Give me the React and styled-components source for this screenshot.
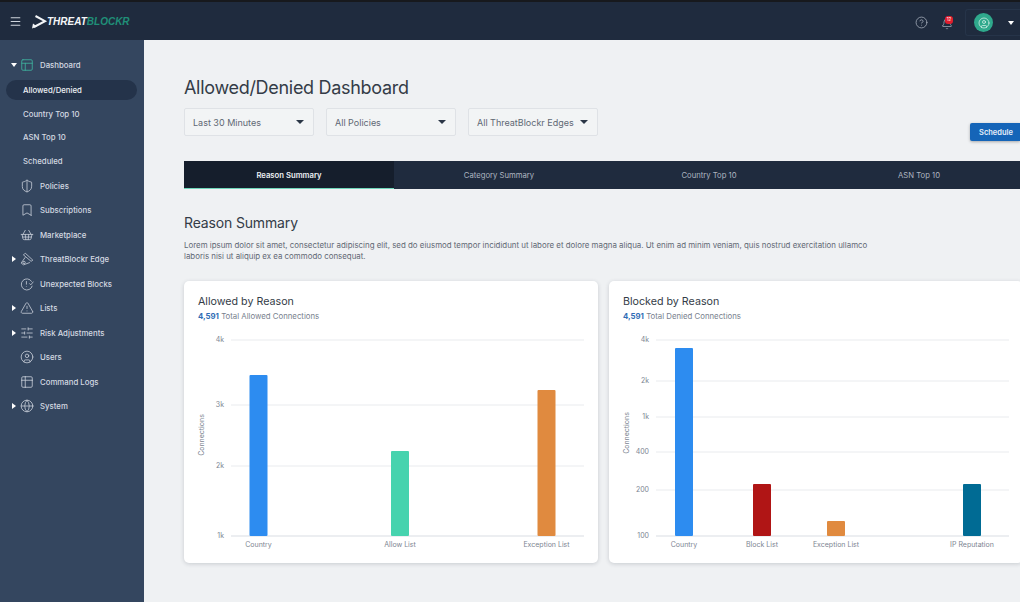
import React from 'react';
import styled, { createGlobalStyle } from 'styled-components';
import {
  Menu,
  CircleHelp,
  Bell,
  CircleUser,
  PanelsTopLeft,
  ShieldHalf,
  Bookmark,
  ShoppingBasket,
  TriangleAlert,
  SlidersHorizontal,
  Table2,
  Globe,
} from 'lucide-react';

const Edge = (props) => (
  <svg viewBox='0 0 24 24' fill='none' stroke='currentColor' strokeWidth='1.5' {...props}>
    <path d='M9 2l13 12-3 2L6 5z' />
    <path d='M9 9l-7 10 4 3 11-4' />
    <circle cx='7' cy='18' r='2' />
  </svg>
);

const Unexpected = (props) => (
  <svg viewBox='0 0 24 24' fill='none' stroke='currentColor' strokeWidth='1.5' {...props}>
    <path d='M20 8a9.5 9.5 0 1 0 1 7' />
    <path d='M11 7v6M11 16v1' />
    <path d='M16 11l2.5 2.5L23 8' />
  </svg>
);

const Arrow = () => (
  <svg width='16' height='14' viewBox='0 0 16 14'>
    <path d='M3.5 1L13 6.2 2 12' fill='none' stroke='#f4f6f8' strokeWidth='2' />
    <path d='M0 13.5l1-5 4 3z' fill='#f4f6f8' />
  </svg>
);

const NAV = [
  {
    label: 'Dashboard',
    icon: PanelsTopLeft,
    caret: 'down',
    teal: true,
    children: ['Allowed/Denied', 'Country Top 10', 'ASN Top 10', 'Scheduled'],
  },
  { label: 'Policies', icon: ShieldHalf },
  { label: 'Subscriptions', icon: Bookmark },
  { label: 'Marketplace', icon: ShoppingBasket },
  { label: 'ThreatBlockr Edge', icon: Edge, caret: 'right' },
  { label: 'Unexpected Blocks', icon: Unexpected },
  { label: 'Lists', icon: TriangleAlert, caret: 'right' },
  { label: 'Risk Adjustments', icon: SlidersHorizontal, caret: 'right' },
  { label: 'Users', icon: CircleUser },
  { label: 'Command Logs', icon: Table2 },
  { label: 'System', icon: Globe, caret: 'right' },
];

const TABS = ['Reason Summary', 'Category Summary', 'Country Top 10', 'ASN Top 10'];

const ALLOWED = {
  title: 'Allowed by Reason',
  total: 'Total Allowed Connections',
  axisY: 105,
  ticks: [
    { label: '4k', y: 10 },
    { label: '3k', y: 75 },
    { label: '2k', y: 136 },
    { label: '1k', y: 206 },
  ],
  bars: [
    { label: 'Country', x: 65.5, top: 45, color: '#2d8cf0' },
    { label: 'Allow List', x: 207, top: 121, color: '#46d3ae' },
    { label: 'Exception List', x: 353.5, top: 60, color: '#e08a3f' },
  ],
};

const BLOCKED = {
  title: 'Blocked by Reason',
  total: 'Total Denied Connections',
  axisY: 103,
  ticks: [
    { label: '4k', y: 10 },
    { label: '2k', y: 51 },
    { label: '1k', y: 87 },
    { label: '400', y: 122 },
    { label: '200', y: 160 },
    { label: '100', y: 206 },
  ],
  bars: [
    { label: 'Country', x: 66, top: 18, color: '#2d8cf0' },
    { label: 'Block List', x: 144, top: 154, color: '#b01515' },
    { label: 'Exception List', x: 218, top: 191, color: '#e08a3f' },
    { label: 'IP Reputation', x: 354, top: 154, color: '#006b94' },
  ],
};

function Chart({ data }) {
  return (
    <svg width='414' height='233' viewBox='0 0 414 233'>
      {data.ticks.map((t) => (
        <g key={t.label}>
          <GridLine x1='47' x2='400' y1={t.y} y2={t.y} $base={t.y === 206} />
          <Tick x='40' y={t.y + 2} textAnchor='end'>
            {t.label}
          </Tick>
        </g>
      ))}
      <Tick transform={`translate(19.5 ${data.axisY}) rotate(-90)`} textAnchor='middle'>
        Connections
      </Tick>
      {data.bars.map((b) => (
        <g key={b.label}>
          <rect x={b.x} y={b.top} width='18' height={206 - b.top} rx='1' fill={b.color} />
          <Tick x={b.x + 9} y='217' textAnchor='middle'>
            {b.label}
          </Tick>
        </g>
      ))}
    </svg>
  );
}

function ReasonCard({ data }) {
  return (
    <Card>
      <CardHead>
        <CardTitle>{data.title}</CardTitle>
        <CardSub>
          <b>4,591</b> {data.total}
        </CardSub>
      </CardHead>
      <Chart data={data} />
    </Card>
  );
}

function NavEntry({ item }) {
  return (
    <>
      <NavRow>
        <CaretSlot>{item.caret && <Caret $dir={item.caret} />}</CaretSlot>
        <NavIcon $teal={item.teal}>
          <item.icon width={14} height={14} strokeWidth={1.4} />
        </NavIcon>
        {item.label}
      </NavRow>
      {item.children && (
        <SubNav>
          {item.children.map((label, i) => (
            <SubRow key={label} $active={i === 0}>
              {label}
            </SubRow>
          ))}
        </SubNav>
      )}
    </>
  );
}

export default function App() {
  return (
    <>
      <GlobalStyle />
      <Frame>
        <TopBar>
          <Burger>
            <Menu size={13} strokeWidth={2} />
          </Burger>
          <Logo>
            <Arrow />
            <LogoText>
              THREAT<em>BLOCKR</em>
            </LogoText>
          </Logo>
          <HeaderTools>
            <ToolIcon>
              <CircleHelp size={13} strokeWidth={1.4} />
            </ToolIcon>
            <ToolIcon $drop>
              <Bell size={12} strokeWidth={1.4} />
              <Badge>12</Badge>
            </ToolIcon>
            <UserBox>
              <Avatar>
                <CircleUser size={12} strokeWidth={1.5} />
              </Avatar>
              <UserCaret />
            </UserBox>
          </HeaderTools>
        </TopBar>
        <Body>
          <Sidebar>
            {NAV.map((item) => (
              <NavEntry key={item.label} item={item} />
            ))}
          </Sidebar>
          <Main>
            <PageTitle>Allowed/Denied Dashboard</PageTitle>
            <FilterRow>
              <Filter>
                Last 30 Minutes
                <FilterCaret />
              </Filter>
              <Filter>
                All Policies
                <FilterCaret />
              </Filter>
              <Filter>
                All ThreatBlockr Edges
                <FilterCaret />
              </Filter>
              <ScheduleButton>Schedule</ScheduleButton>
            </FilterRow>
            <Tabs>
              {TABS.map((t, i) => (
                <Tab key={t} $active={i === 0}>
                  {t}
                </Tab>
              ))}
            </Tabs>
            <SectionTitle>Reason Summary</SectionTitle>
            <Description>
              Lorem ipsum dolor sit amet, consectetur adipiscing elit, sed do eiusmod tempor incididunt ut labore et
              dolore magna aliqua. Ut enim ad minim veniam, quis nostrud exercitation ullamco laboris nisi ut aliquip
              ex ea commodo consequat.
            </Description>
            <CardRow>
              <ReasonCard data={ALLOWED} />
              <ReasonCard data={BLOCKED} />
            </CardRow>
          </Main>
        </Body>
      </Frame>
    </>
  );
}

const GlobalStyle = createGlobalStyle`
  html, body {
    margin: 0;
    background: #fff;
    overflow: hidden;
  }
  * {
    box-sizing: border-box;
  }
`;

const Frame = styled.div`
  width: 1020px;
  height: 602px;
  display: flex;
  flex-direction: column;
  border-top: 2px solid #17191d;
  font-family: Inter, 'Open Sans', sans-serif;
  overflow: hidden;
`;

const TopBar = styled.header`
  height: 38px;
  flex: none;
  display: flex;
  align-items: center;
  background: #1f2b3e;
  color: #cfd5dd;
`;

const Burger = styled.div`
  width: 32px;
  padding-left: 9px;
  display: flex;
`;

const Logo = styled.div`
  padding-top: 1px;
  display: flex;
  align-items: center;
`;

const LogoText = styled.span`
  margin-left: -1px;
  font-family: 'Liberation Sans', Arial, sans-serif;
  font-size: 10px;
  font-weight: 700;
  font-style: italic;
  color: #f4f6f8;

  em {
    color: #1f8f78;
  }
`;

const HeaderTools = styled.div`
  margin-left: auto;
  padding-top: 3px;
  display: flex;
  align-items: center;
`;

const ToolIcon = styled.div`
  position: relative;
  width: 25px;
  padding-top: ${(p) => (p.$drop ? '2px' : '0')};
  display: flex;
  justify-content: center;
  color: #aab3bf;
`;

const Badge = styled.span`
  position: absolute;
  top: 0;
  left: 11px;
  width: 8px;
  height: 8px;
  border-radius: 3px;
  background: #e01e2e;
  color: #fff;
  font-size: 4.5px;
  line-height: 8px;
  text-align: center;
`;

const UserBox = styled.div`
  width: 55px;
  height: 27px;
  margin-left: 6px;
  padding-left: 8px;
  display: flex;
  align-items: center;
  border: 1px solid #263449;
  border-right: 0;
  border-radius: 3px 0 0 3px;
`;

const Avatar = styled.div`
  width: 19px;
  height: 19px;
  display: flex;
  align-items: center;
  justify-content: center;
  border-radius: 50%;
  background: #2fa98c;
  color: #d8f1ea;
`;

const UserCaret = styled.span`
  margin-left: 15px;
  border-left: 3.5px solid transparent;
  border-right: 3.5px solid transparent;
  border-top: 4px solid #fff;
`;

const Body = styled.div`
  flex: 1;
  min-height: 0;
  display: flex;
`;

const Sidebar = styled.nav`
  width: 144px;
  flex: none;
  padding: 12.75px 7px 0 0;
  background: #34465f;
  color: #d5dae2;
  font-size: 7.8px;
  font-weight: 500;
  white-space: nowrap;
`;

const NavRow = styled.div`
  height: 24.5px;
  display: flex;
  align-items: center;
`;

const SubNav = styled.div`
  padding: 3px 0;
  display: flex;
  flex-direction: column;
  gap: 4px;
`;

const SubRow = styled.div`
  height: 19.5px;
  margin-left: 6px;
  padding-left: 17px;
  display: flex;
  align-items: center;
  border-radius: 10px;
  background: ${(p) => (p.$active ? '#24334a' : 'transparent')};
  color: ${(p) => (p.$active ? '#eef1f5' : 'inherit')};
`;

const CaretSlot = styled.span`
  width: 20px;
  flex: none;
  padding-left: 11px;
  display: flex;
  align-items: center;
`;

const Caret = styled.i`
  display: block;
  ${(p) =>
    p.$dir === 'down'
      ? `border-left: 3px solid transparent;
         border-right: 3px solid transparent;
         border-top: 4px solid #fff;`
      : `margin-left: 1px;
         border-top: 3px solid transparent;
         border-bottom: 3px solid transparent;
         border-left: 4px solid #fff;`}
`;

const NavIcon = styled.span`
  width: 20px;
  flex: none;
  display: flex;
  color: ${(p) => (p.$teal ? '#3fb5a0' : '#c5ccd6')};
`;

const Main = styled.main`
  flex: 1;
  min-width: 0;
  padding: 36px 0 0 40px;
  background: #eff1f3;
  overflow: hidden;
`;

const PageTitle = styled.h1`
  margin: 0;
  font-size: 18px;
  line-height: 24px;
  font-weight: 400;
  letter-spacing: -0.3px;
  color: #343c47;
`;

const FilterRow = styled.div`
  margin-top: 8px;
  display: flex;
  gap: 12px;
`;

const Filter = styled.div`
  width: 130px;
  height: 28px;
  padding: 0 9px 0 8px;
  display: flex;
  align-items: center;
  justify-content: space-between;
  border: 1px solid #dfe2e6;
  border-radius: 2px;
  background: #f2f4f5;
  color: #5f6874;
  font-size: 9px;
  white-space: nowrap;
`;

const FilterCaret = styled.span`
  flex: none;
  border-left: 4px solid transparent;
  border-right: 4px solid transparent;
  border-top: 4px solid #2b3646;
`;

const ScheduleButton = styled.button`
  margin: 15px 0 -5px auto;
  width: 50px;
  height: 18px;
  padding: 0 0 0 2px;
  border: 0;
  border-radius: 2px 0 0 2px;
  background: #1565b8;
  color: #e6eef8;
  font-family: inherit;
  font-size: 7.5px;
  font-weight: 600;
  box-shadow: 0 1px 3px rgba(0, 0, 0, 0.3);
`;

const Tabs = styled.div`
  width: 840px;
  height: 28px;
  margin-top: 25px;
  display: grid;
  grid-template-columns: repeat(4, 210px);
  border-radius: 2px 0 0 0;
  background: #1f2b3e;
`;

const Tab = styled.div`
  padding-top: 2px;
  display: flex;
  align-items: center;
  justify-content: center;
  font-size: 7.7px;
  font-weight: ${(p) => (p.$active ? 600 : 400)};
  color: ${(p) => (p.$active ? '#eef1f5' : '#aeb5c0')};
  background: ${(p) => (p.$active ? '#151e2c' : 'transparent')};
  border-bottom: 1px solid ${(p) => (p.$active ? '#6fd6bb' : 'transparent')};
`;

const SectionTitle = styled.h2`
  margin: 24px 0 0;
  font-size: 14px;
  line-height: 20px;
  font-weight: 400;
  letter-spacing: -0.15px;
  color: #343c47;
`;

const Description = styled.p`
  width: 700px;
  margin: 7px 0 0;
  font-size: 7.9px;
  line-height: 11px;
  color: #5f6874;
`;

const CardRow = styled.div`
  margin-top: 19px;
  display: flex;
  gap: 11px;
`;

const Card = styled.section`
  width: 414px;
  height: 282px;
  flex: none;
  border-radius: 5px;
  background: #fff;
  box-shadow: 0 1px 4px rgba(30, 40, 55, 0.18);
`;

const CardHead = styled.div`
  height: 49px;
  padding: 14px 0 0 14px;
`;

const CardTitle = styled.h3`
  margin: 0;
  font-size: 10.7px;
  line-height: 14px;
  font-weight: 400;
  color: #343c47;
`;

const CardSub = styled.div`
  margin-top: 2px;
  font-size: 7.8px;
  line-height: 11px;
  color: #78818e;

  b {
    color: #2f6db5;
    font-weight: 700;
  }
`;

const GridLine = styled.line`
  stroke: ${(p) => (p.$base ? '#d9dde3' : '#e9ebee')};
  stroke-width: 1;
`;

const Tick = styled.text`
  font-size: 7px;
  fill: #7d8592;
`;
